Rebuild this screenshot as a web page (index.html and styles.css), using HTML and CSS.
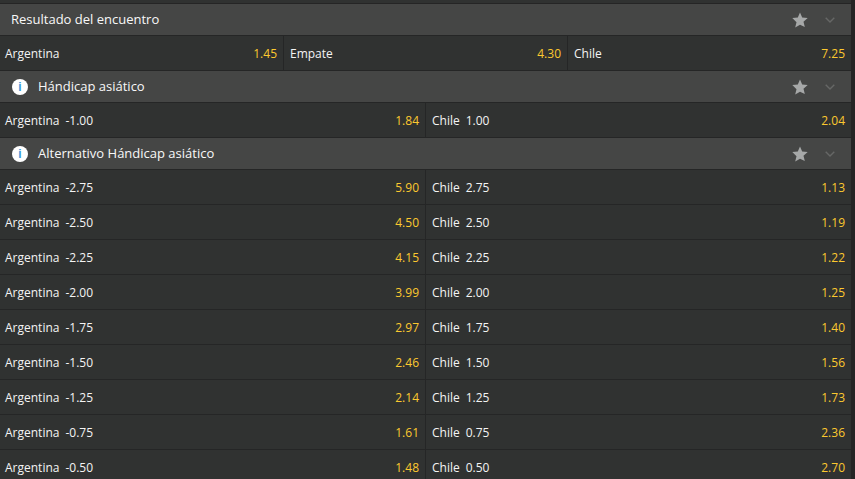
FILE: index.html
```html
<!DOCTYPE html>
<html lang="es">
<head>
  <meta charset="UTF-8">
  <title>Resultado del encuentro</title>
  <link rel="stylesheet" href="styles.css">
</head>
<body>
  <div class="markets">
    <div class="top-strip"></div>

    <div class="market-head">
      <span class="market-title plain">Resultado del encuentro</span>
      <svg class="star" viewBox="0 0 16 16"><path d="M8 .5l2.2 5.1 5.5.5-4.2 3.6 1.3 5.4L8 12.7l-4.8 2.9 1.3-5.4L.3 6.1l5.5-.5z"/></svg>
      <svg class="chevron" viewBox="0 0 10 6"><path d="M.7.7L5 5l4.3-4.3"/></svg>
    </div>
    <div class="row cols-3">
      <div class="cell"><span>Argentina</span><span class="odds">1.45</span></div>
      <div class="cell"><span>Empate</span><span class="odds">4.30</span></div>
      <div class="cell"><span>Chile</span><span class="odds">7.25</span></div>
    </div>

    <div class="market-head">
      <span class="info">i</span>
      <span class="market-title">Hándicap asiático</span>
      <svg class="star" viewBox="0 0 16 16"><path d="M8 .5l2.2 5.1 5.5.5-4.2 3.6 1.3 5.4L8 12.7l-4.8 2.9 1.3-5.4L.3 6.1l5.5-.5z"/></svg>
      <svg class="chevron" viewBox="0 0 10 6"><path d="M.7.7L5 5l4.3-4.3"/></svg>
    </div>
    <div class="row cols-2">
      <div class="cell"><span>Argentina<b>-1.00</b></span><span class="odds">1.84</span></div>
      <div class="cell"><span>Chile<b>1.00</b></span><span class="odds">2.04</span></div>
    </div>

    <div class="market-head">
      <span class="info">i</span>
      <span class="market-title">Alternativo Hándicap asiático</span>
      <svg class="star" viewBox="0 0 16 16"><path d="M8 .5l2.2 5.1 5.5.5-4.2 3.6 1.3 5.4L8 12.7l-4.8 2.9 1.3-5.4L.3 6.1l5.5-.5z"/></svg>
      <svg class="chevron" viewBox="0 0 10 6"><path d="M.7.7L5 5l4.3-4.3"/></svg>
    </div>
    <div class="row cols-2">
      <div class="cell"><span>Argentina<b>-2.75</b></span><span class="odds">5.90</span></div>
      <div class="cell"><span>Chile<b>2.75</b></span><span class="odds">1.13</span></div>
    </div>
    <div class="row cols-2">
      <div class="cell"><span>Argentina<b>-2.50</b></span><span class="odds">4.50</span></div>
      <div class="cell"><span>Chile<b>2.50</b></span><span class="odds">1.19</span></div>
    </div>
    <div class="row cols-2">
      <div class="cell"><span>Argentina<b>-2.25</b></span><span class="odds">4.15</span></div>
      <div class="cell"><span>Chile<b>2.25</b></span><span class="odds">1.22</span></div>
    </div>
    <div class="row cols-2">
      <div class="cell"><span>Argentina<b>-2.00</b></span><span class="odds">3.99</span></div>
      <div class="cell"><span>Chile<b>2.00</b></span><span class="odds">1.25</span></div>
    </div>
    <div class="row cols-2">
      <div class="cell"><span>Argentina<b>-1.75</b></span><span class="odds">2.97</span></div>
      <div class="cell"><span>Chile<b>1.75</b></span><span class="odds">1.40</span></div>
    </div>
    <div class="row cols-2">
      <div class="cell"><span>Argentina<b>-1.50</b></span><span class="odds">2.46</span></div>
      <div class="cell"><span>Chile<b>1.50</b></span><span class="odds">1.56</span></div>
    </div>
    <div class="row cols-2">
      <div class="cell"><span>Argentina<b>-1.25</b></span><span class="odds">2.14</span></div>
      <div class="cell"><span>Chile<b>1.25</b></span><span class="odds">1.73</span></div>
    </div>
    <div class="row cols-2">
      <div class="cell"><span>Argentina<b>-0.75</b></span><span class="odds">1.61</span></div>
      <div class="cell"><span>Chile<b>0.75</b></span><span class="odds">2.36</span></div>
    </div>
    <div class="row cols-2">
      <div class="cell"><span>Argentina<b>-0.50</b></span><span class="odds">1.48</span></div>
      <div class="cell"><span>Chile<b>0.50</b></span><span class="odds">2.70</span></div>
    </div>
  </div>
</body>
</html>
```

FILE: styles.css
```css
html, body {
  margin: 0;
  height: 100%;
  overflow: hidden;
  background: #252525;
}

body {
  font-family: "Open Sans", sans-serif;
  font-size: 12px;
  color: #f4f4f4;
}

.markets {
  width: 851px;
}

.top-strip {
  height: 3px;
  background: #303231;
  border-bottom: 1px solid #252525;
}

.market-head {
  display: flex;
  align-items: center;
  height: 31px;
  background: #454645;
  border-bottom: 1px solid #252626;
  padding-left: 11px;
  padding-right: 15px;
}

.market-title {
  flex: 1;
  font-size: 13px;
  color: #f8f8f8;
  margin-left: 10px;
  padding-bottom: 2px;
}

.market-title.plain {
  margin-left: 0;
}

.info {
  width: 16px;
  height: 16px;
  margin-left: 1px;
  border-radius: 50%;
  background: #ffffff;
  color: #3a9ad9;
  font-family: "Liberation Sans", sans-serif;
  font-weight: bold;
  font-size: 12px;
  line-height: 16px;
  text-align: center;
}

.star {
  width: 16px;
  height: 16px;
  fill: #a6a8a8;
}

.chevron {
  width: 10px;
  height: 6px;
  margin-left: 17px;
  margin-right: 1px;
  fill: none;
  stroke: #666766;
  stroke-width: 1.4;
}

.row {
  display: grid;
  height: 34px;
  background: #303231;
  border-bottom: 1px solid #252626;
}

.cols-3 {
  grid-template-columns: 284px 284px 1fr;
}

.cols-2 {
  grid-template-columns: 426px 1fr;
}

.cell {
  display: flex;
  justify-content: space-between;
  align-items: center;
  padding: 0 6px;
  border-right: 1px solid #252626;
}

.cell:first-child {
  padding-left: 5px;
}

.cell:last-child {
  border-right: none;
}

.cell b {
  font-weight: normal;
  margin-left: 6px;
}

.odds {
  color: #fcc92f;
}
```
